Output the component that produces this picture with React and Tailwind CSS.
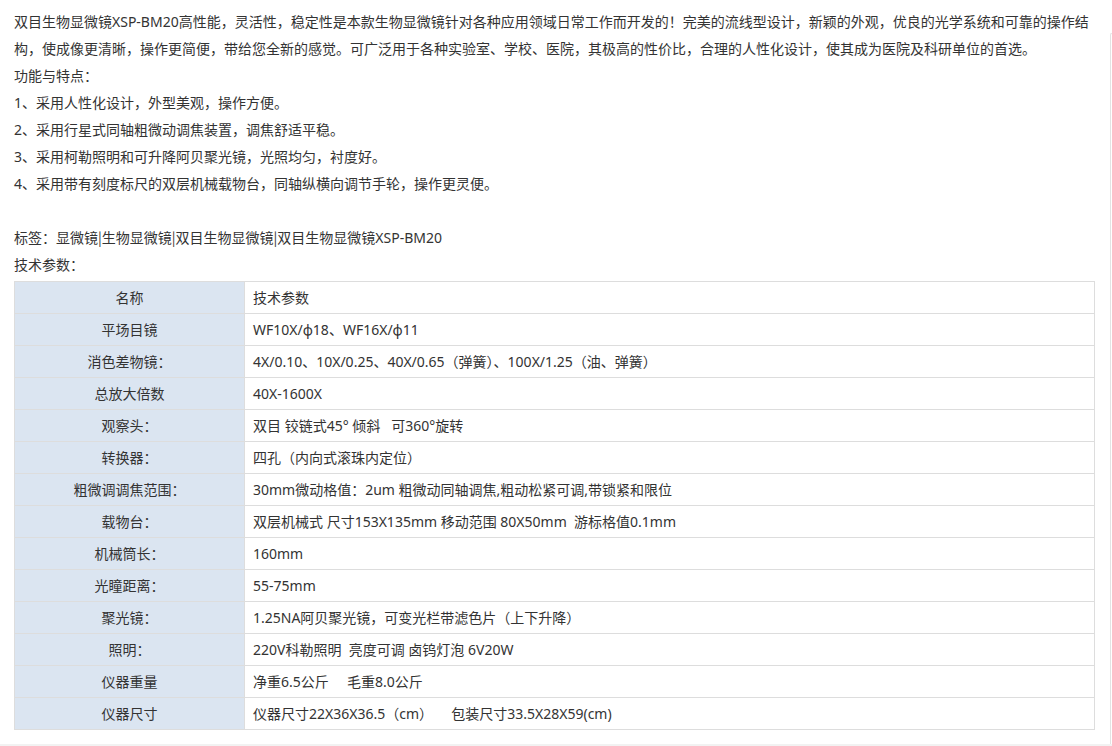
const features = [
  '1、采用人性化设计，外型美观，操作方便。',
  '2、采用行星式同轴粗微动调焦装置，调焦舒适平稳。',
  '3、采用柯勒照明和可升降阿贝聚光镜，光照均匀，衬度好。',
  '4、采用带有刻度标尺的双层机械载物台，同轴纵横向调节手轮，操作更灵便。',
];

const tags = ['显微镜', '生物显微镜', '双目生物显微镜', '双目生物显微镜XSP-BM20'];

const specs = [
  ['名称', '技术参数'],
  ['平场目镜', 'WF10X/ϕ18、WF16X/ϕ11'],
  ['消色差物镜：', '4X/0.10、10X/0.25、40X/0.65（弹簧）、100X/1.25（油、弹簧）'],
  ['总放大倍数', '40X-1600X'],
  ['观察头：', '双目 铰链式45° 倾斜\u00a0\u00a0 可360°旋转'],
  ['转换器：', '四孔（内向式滚珠内定位）'],
  ['粗微调调焦范围：', '30mm微动格值：2um 粗微动同轴调焦,粗动松紧可调,带锁紧和限位'],
  ['载物台：', '双层机械式 尺寸153X135mm 移动范围 80X50mm\u00a0 游标格值0.1mm'],
  ['机械筒长：', '160mm'],
  ['光瞳距离：', '55-75mm'],
  ['聚光镜：', '1.25NA阿贝聚光镜，可变光栏带滤色片（上下升降）'],
  ['照明：', '220V科勒照明\u00a0 亮度可调 卤钨灯泡 6V20W'],
  ['仪器重量', '净重6.5公斤\u00a0\u00a0\u00a0\u00a0 毛重8.0公斤'],
  ['仪器尺寸', '仪器尺寸22X36X36.5（cm）\u00a0\u00a0\u00a0\u00a0 包装尺寸33.5X28X59(cm)'],
];

export default function App() {
  return (
    <div className="relative h-[746px] w-[1112px] overflow-hidden bg-white font-['Noto_Sans','Noto_Sans_CJK_SC',sans-serif] text-[14px] text-[#333]">
      <div className="flex">
        <div className="w-[1110px] pl-[14px] pt-[8px]">
          <div className="w-[1084px] leading-[27px]">
            <p>
              双目生物显微镜XSP-BM20高性能，灵活性，稳定性是本款生物显微镜针对各种应用领域日常工作而开发的！完美的流线型设计，新颖的外观，优良的光学系统和可靠的操作结构，使成像更清晰，操作更简便，带给您全新的感觉。可广泛用于各种实验室、学校、医院，其极高的性价比，合理的人性化设计，使其成为医院及科研单位的首选。
            </p>
            <p>功能与特点：</p>
            {features.map((f) => (
              <p key={f}>{f}</p>
            ))}
            <p>&nbsp;</p>
            <p>
              标签：
              {tags.map((t, i) => (
                <span key={t}>
                  {i > 0 && <span className="font-['Noto_Sans_CJK_SC',sans-serif]">|</span>}
                  {t}
                </span>
              ))}
            </p>
            <p>技术参数：</p>
          </div>

          <table className="mt-[3px] w-[1081px] border-collapse border border-[#dddddd]">
            <tbody>
              {specs.map(([name, value]) => (
                <tr key={name} className="h-[32px]">
                  <td className="w-[230px] border border-[#dddddd] bg-[#dbe5f1] p-0 text-center align-middle leading-[20px]">
                    {name}
                  </td>
                  <td className="border border-[#dddddd] p-0 pl-[8px] align-middle leading-[20px]">{value}</td>
                </tr>
              ))}
            </tbody>
          </table>
        </div>
        <div className="mt-[33px] h-[720px] w-[2px] rounded-tl border-l border-t border-[#e3e3e3]" />
      </div>
      <div className="absolute bottom-0 left-0 h-[2px] w-full bg-[#f2f2f2]" />
    </div>
  );
}
